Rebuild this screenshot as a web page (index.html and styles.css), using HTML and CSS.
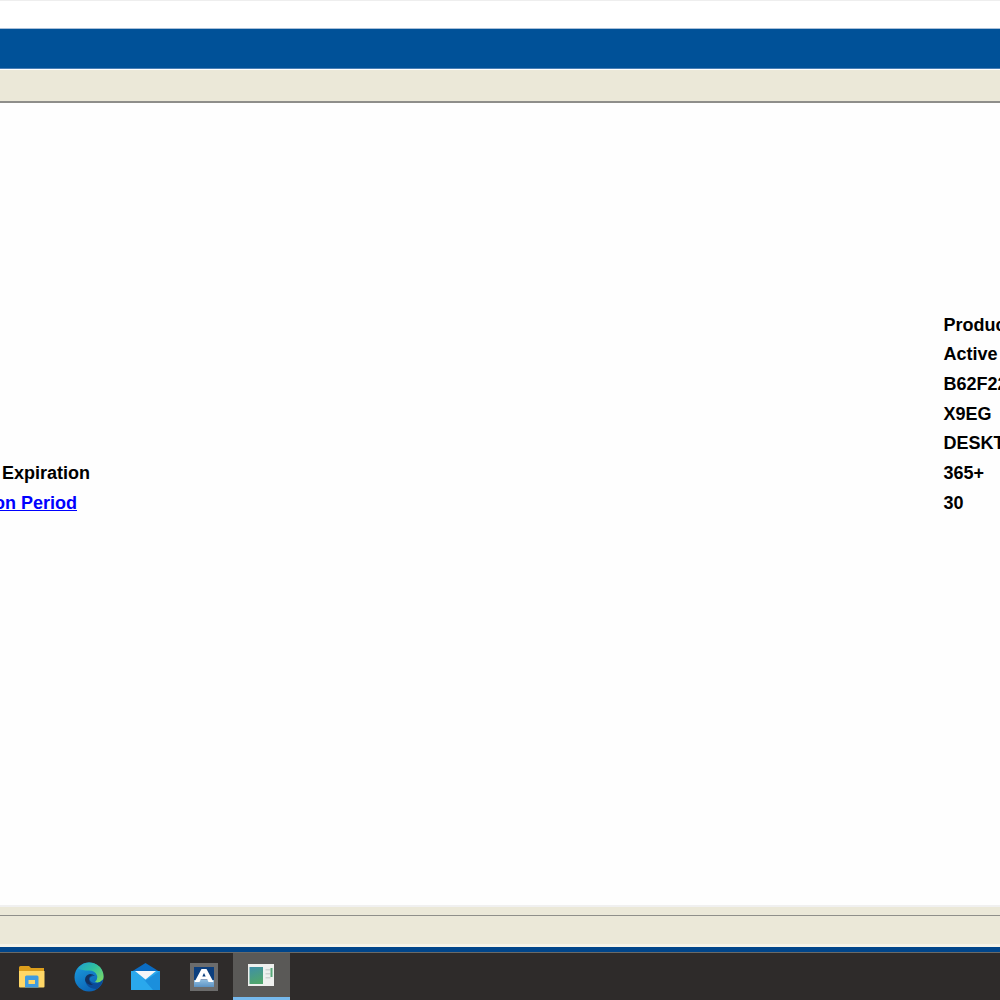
FILE: index.html
```html
<!DOCTYPE html>
<html lang="en">
<head>
  <meta charset="UTF-8">
  <title>Product Information</title>
  <link rel="stylesheet" href="styles.css">
</head>
<body>

<div class="top-strip"></div>
<div class="header-bar"></div>
<div class="tool-bar"></div>

<div class="content">
  <div class="info-table">
    <div class="key"></div><div class="val">Product</div>
    <div class="key"></div><div class="val">Active</div>
    <div class="key"></div><div class="val">B62F22</div>
    <div class="key"></div><div class="val">X9EG</div>
    <div class="key"></div><div class="val">DESKTOP</div>
    <div class="key">Product Expiration</div><div class="val">365+</div>
    <div class="key"><a href="#">Activation Period</a></div><div class="val">30</div>
  </div>
</div>

<div class="status-bar">
  <div class="status-top"></div>
  <div class="status-main"></div>
</div>
<div class="bottom-blue"></div>

<div class="taskbar">
  <div class="task-btn">
    <svg width="28" height="24" viewBox="0 0 28 24">
      <path d="M1 2.500Q1 1 2.500 1H11L13 3H26V9H1Z" fill="#dd9f1c"/>
      <path d="M1 6H26.500V21.500Q26.500 22.500 25.500 22.500H2Q1 22.500 1 21.500Z" fill="#ffd766"/>
      <path d="M7 12Q7 10.500 8.500 10.500H19Q20.500 10.500 20.500 12V22.500H7Z" fill="#3f9be0"/>
      <rect x="10.500" y="15" width="6.500" height="4" fill="#ffd766"/>
    </svg>
  </div>
  <div class="task-btn">
    <svg width="30" height="30" viewBox="0 0 30 30">
      <defs>
        <linearGradient id="edgeA" x1="0" y1="0" x2="0.600" y2="1">
          <stop offset="0" stop-color="#1c9fe0"/>
          <stop offset="1" stop-color="#0b62b4"/>
        </linearGradient>
        <linearGradient id="edgeB" x1="0" y1="0" x2="1" y2="0.800">
          <stop offset="0" stop-color="#1f9fd0"/>
          <stop offset="0.500" stop-color="#2fc0a0"/>
          <stop offset="1" stop-color="#79d868"/>
        </linearGradient>
      </defs>
      <circle cx="15" cy="15" r="14.500" fill="url(#edgeA)"/>
      <path d="M4 6.500Q8.500 .5 15 .5Q24 .5 28 8Q30.500 13 29 17.500Q26 21.500 21 20Q24 17 23 13.500Q21 8.500 15 8.500Q8 8.500 4 6.500Z" fill="url(#edgeB)"/>
      <path d="M23 27Q16 27 13 23Q10 19 13 15.500Q15.500 13 19 14Q16 14.500 15.500 17Q16 20 20 21Q25 22 29 17.500Q28 23 23 27Z" fill="#0b4a98"/>
      <path d="M11 18Q11 13 16 12Q19 12 21 14Q16.500 12.500 15 16Q14.500 20 19 23Q12 23 11 18Z" fill="#12305f"/>
    </svg>
  </div>
  <div class="task-btn">
    <svg width="30" height="28" viewBox="0 0 30 28">
      <path d="M0 9L14.500 0L29 9Z" fill="#0b6cc2"/>
      <path d="M0 8H29V27H0Z" fill="#2aa8ec"/>
      <path d="M4 8H25L14.500 16.500Z" fill="#f4f6f8"/>
      <path d="M12 15.500L14.500 17.500L29 8V27H22Z" fill="#1b8fdc"/>
    </svg>
  </div>
  <div class="task-btn">
    <svg width="28" height="28" viewBox="0 0 28 28">
      <defs>
        <linearGradient id="acroBase" x1="0" y1="0" x2="0" y2="1">
          <stop offset="0" stop-color="#8fbde0"/>
          <stop offset="1" stop-color="#5c93c4"/>
        </linearGradient>
      </defs>
      <rect width="28" height="28" fill="#6c6c6c"/>
      <rect x="4" y="4" width="20" height="13" fill="#0c3f7e"/>
      <rect x="4" y="17" width="20" height="7" fill="url(#acroBase)"/>
      <path d="M4.500 19L11.500 6H16.500L23.500 19H18.500L17.300 16.500H10.700L9.500 19Z" fill="#ffffff"/>
      <path d="M12.300 13.500H15.700L14 10Z" fill="#0c3f7e"/>
    </svg>
  </div>
  <div class="task-btn active">
    <svg width="26" height="22" viewBox="0 0 26 22">
      <defs>
        <linearGradient id="panelFill" x1="0" y1="0" x2="0.300" y2="1">
          <stop offset="0" stop-color="#3f8fa8"/>
          <stop offset="1" stop-color="#4fa56e"/>
        </linearGradient>
      </defs>
      <rect width="26" height="22" fill="#eef0ee"/>
      <rect x="1.500" y="3" width="13.500" height="17" fill="url(#panelFill)"/>
      <rect x="17.500" y="5" width="5" height="1.500" fill="#cfd3d1"/>
      <rect x="17.500" y="9" width="5" height="1.500" fill="#cfd3d1"/>
      <rect x="17.500" y="13" width="5" height="1.500" fill="#cfd3d1"/>
      <rect x="22.500" y="4" width="2" height="9" fill="#57a878"/>
    </svg>
  </div>
</div>

</body>
</html>
```

FILE: styles.css
```css
html, body {
  margin: 0;
  height: 100%;
  overflow: hidden;
}

body {
  display: flex;
  flex-direction: column;
  width: 1000px;
  height: 1000px;
  background: #fefefe;
  font-family: "Liberation Sans", Arial, sans-serif;
}

.top-strip {
  height: 28px;
  background: white;
  border-top: 1px solid #eeeeee;
  box-sizing: border-box;
}

.header-bar {
  height: 41px;
  background: #005198;
  border-top: 1px solid #a9bfd8;
  border-bottom: 1px solid #4a7fb5;
  box-sizing: border-box;
}

.tool-bar {
  height: 33px;
  margin-top: 1px;
  background: #ebe8d8;
  border-bottom: 2px solid #8e8e8a;
  box-sizing: border-box;
}

.content {
  flex: 1;
  padding-top: 207.4px;
  overflow: hidden;
}

.info-table {
  display: grid;
  grid-template-columns: 1014.5px 200px;
  grid-auto-rows: 29.67px;
  align-items: center;
  margin-left: -71px;
  font-size: 18px;
  font-weight: bold;
  color: black;
}

.info-table a {
  color: #0000ff;
}

.status-bar {
  background: #ebe8d8;
  border-top: 2px solid #f0f0f0;
}

.status-top {
  height: 8px;
  border-bottom: 1px solid #8f8f8a;
}

.status-main {
  height: 28px;
  border-bottom: 3px solid #f5f3e9;
}

.bottom-blue {
  height: 5px;
  background: #00458a;
}

.taskbar {
  display: flex;
  height: 48px;
  box-sizing: border-box;
  padding-left: 3px;
  background: #2e2b2a;
  border-top: 1px solid #6a6a68;
}

.task-btn {
  display: flex;
  align-items: center;
  justify-content: center;
  width: 57.4px;
  box-sizing: border-box;
}

.task-btn.active {
  background: #5a5957;
  border-bottom: 3px solid #76b9ed;
}
```
